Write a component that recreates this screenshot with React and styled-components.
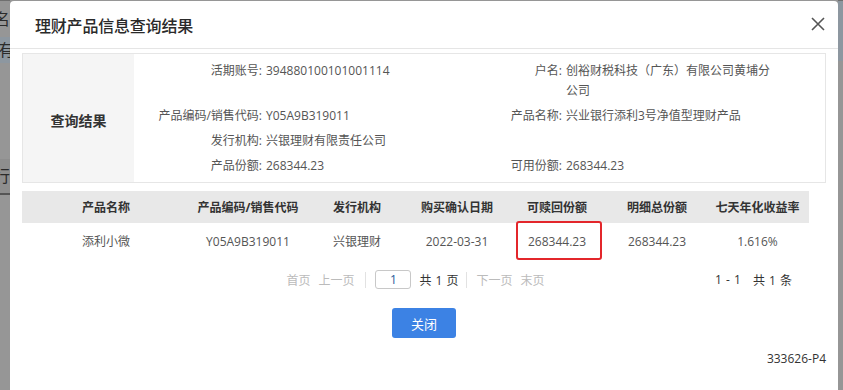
import styled, { createGlobalStyle } from "styled-components";

const GlobalStyle = createGlobalStyle`
  html, body {
    margin: 0;
    padding: 0;
    height: 100%;
    overflow: hidden;
  }
  body {
    font-family: "Open Sans", "Noto Sans CJK SC", sans-serif;
    color: #333;
  }
`;

const cols = "168px 116px 102px 98px 102px 98px 103px";

const Page = styled.div`
  display: flex;
  height: 390px;
  background: #969696;
  overflow: hidden;
`;

const SideStrip = styled.div`
  width: ${(p) => p.w}px;
  flex: none;
  display: flex;
  flex-direction: column;
  border-top: 1px solid #6f6f6f;
  overflow: hidden;
`;

const StripBand = styled.div`
  height: ${(p) => p.h}px;
  background: ${(p) => p.bg || "transparent"};
  font-size: 16px;
  line-height: ${(p) => p.h}px;
  color: #2b2b2b;
  white-space: nowrap;
  text-indent: ${(p) => p.indent || 0}px;
`;

const Modal = styled.div`
  width: 828px;
  flex: none;
  margin-top: 1px;
  background: #fff;
  border-radius: 4px 4px 0 0;
  display: flex;
  flex-direction: column;
`;

const Header = styled.div`
  height: 47px;
  border-bottom: 1px solid #e5e5e5;
  display: flex;
  align-items: center;
  justify-content: space-between;
  padding: 0 13px 0 25px;
`;

const Title = styled.div`
  font-size: 16px;
  font-weight: 500;
  color: #2a2a2a;
  letter-spacing: -0.2px;
`;

const CloseIcon = styled.svg`
  width: 14px;
  height: 14px;
  margin-top: -2px;
`;

const Body = styled.div`
  padding: 4px 12px 0;
  display: flex;
  flex-direction: column;
`;

const InfoBox = styled.div`
  height: 130px;
  border: 1px solid #e6e6e6;
  box-sizing: border-box;
  display: flex;
`;

const InfoLabel = styled.div`
  width: 111px;
  background: #f5f5f5;
  display: flex;
  align-items: center;
  justify-content: center;
  font-size: 14px;
  font-weight: 700;
  color: #333;
  padding-top: 4px;
`;

const InfoGrid = styled.div`
  display: grid;
  grid-template-columns: 128px 164px 128px 206px;
  column-gap: 4px;
  align-content: start;
  padding-top: 4px;
  font-size: 12px;
  line-height: 20px;
`;

const FieldName = styled.div`
  text-align: right;
  color: #555;
  padding: 2.5px 0;
  white-space: nowrap;
`;

const FieldValue = styled.div`
  color: #555;
  padding: 2.5px 0;
  word-break: break-all;
`;

const Table = styled.div`
  margin-top: 8px;
  width: 787px;
  font-size: 12px;
`;

const Row = styled.div`
  display: grid;
  grid-template-columns: ${cols};
  height: ${(p) => (p.head ? 32 : 36)}px;
  align-items: center;
  background: ${(p) => (p.head ? "#e8e8e8" : "#fff")};
  font-weight: ${(p) => (p.head ? 700 : 400)};
  color: ${(p) => (p.head ? "#333" : "#555")};
`;

const Cell = styled.div`
  position: relative;
  text-align: center;
  height: 100%;
  display: flex;
  align-items: center;
  justify-content: center;
`;

const Mark = styled.span`
  position: absolute;
  left: 10px;
  top: -2px;
  width: 86px;
  height: 39px;
  box-sizing: border-box;
  border: 2px solid #e3262b;
  border-radius: 3px;
`;

const Pager = styled.div`
  width: 787px;
  margin-top: 11px;
  display: grid;
  grid-template-columns: 1fr auto 1fr;
  align-items: center;
  font-size: 12px;
  height: 19px;
`;

const PagerGroup = styled.div`
  grid-column: 2;
  display: flex;
  align-items: center;
`;

const PageLink = styled.span`
  color: #bbb;
  margin-right: ${(p) => p.mr || 0}px;
`;

const Sep = styled.span`
  width: 1px;
  height: 16px;
  background: #e2e2e2;
  margin: 0 ${(p) => p.mr}px 0 ${(p) => p.ml}px;
`;

const PageInput = styled.div`
  width: 36px;
  height: 19px;
  box-sizing: border-box;
  border: 1px solid #c8c8c8;
  border-radius: 3px;
  display: flex;
  align-items: center;
  justify-content: center;
  color: #2a5b9a;
  margin-right: 8px;
`;

const PageTotal = styled.span`
  color: #333;
  word-spacing: 1px;
`;

const Count = styled.div`
  justify-self: end;
  padding-right: 17px;
  color: #333;
  display: flex;
  gap: 12px;
  word-spacing: 1px;
`;

const Actions = styled.div`
  display: flex;
  justify-content: center;
  margin-top: 19px;
`;

const CloseButton = styled.button`
  width: 64px;
  height: 30px;
  border: none;
  border-radius: 3px;
  background: #3c82e4;
  color: #fff;
  font-family: inherit;
  font-size: 13px;
  padding: 0;
`;

const Footnote = styled.div`
  align-self: flex-end;
  margin-top: 12px;
  font-size: 12px;
  color: #333;
`;

const fields = [
  ["活期账号:", "394880100101001114", "户名:", "创裕财税科技（广东）有限公司黄埔分公司"],
  ["产品编码/销售代码:", "Y05A9B319011", "产品名称:", "兴业银行添利3号净值型理财产品"],
  ["发行机构:", "兴银理财有限责任公司", "", ""],
  ["产品份额:", "268344.23", "可用份额:", "268344.23"],
];

const heads = ["产品名称", "产品编码/销售代码", "发行机构", "购买确认日期", "可赎回份额", "明细总份额", "七天年化收益率"];
const rows = [["添利小微", "Y05A9B319011", "兴银理财", "2022-03-31", "268344.23", "268344.23", "1.616%"]];

export default function App() {
  return (
    <>
      <GlobalStyle />
      <Page>
        <SideStrip w={10}>
          <StripBand h={36} indent={-6}>名</StripBand>
          <StripBand h={26} bg="#8d97a0" indent={-2}>有</StripBand>
          <StripBand h={96} />
          <StripBand h={34} bg="#8e8e8e" indent={-6}>行</StripBand>
          <StripBand h={2} bg="#555" />
        </SideStrip>
        <Modal>
          <Header>
            <Title>理财产品信息查询结果</Title>
            <CloseIcon viewBox="0 0 14 14">
              <path d="M1 1L13 13M13 1L1 13" stroke="#555" strokeWidth="1.6" fill="none" />
            </CloseIcon>
          </Header>
          <Body>
            <InfoBox>
              <InfoLabel>查询结果</InfoLabel>
              <InfoGrid>
                {fields.map((f, i) => [
                  <FieldName key={`a${i}`}>{f[0]}</FieldName>,
                  <FieldValue key={`b${i}`}>{f[1]}</FieldValue>,
                  <FieldName key={`c${i}`}>{f[2]}</FieldName>,
                  <FieldValue key={`d${i}`}>{f[3]}</FieldValue>,
                ])}
              </InfoGrid>
            </InfoBox>
            <Table>
              <Row head>
                {heads.map((h) => (
                  <Cell key={h}>{h}</Cell>
                ))}
              </Row>
              {rows.map((r, i) => (
                <Row key={i}>
                  {r.map((v, j) => (
                    <Cell key={j}>
                      {v}
                      {j === 4 && <Mark />}
                    </Cell>
                  ))}
                </Row>
              ))}
            </Table>
            <Pager>
              <PagerGroup>
                <PageLink mr={8}>首页</PageLink>
                <PageLink>上一页</PageLink>
                <Sep ml={11} mr={9} />
                <PageInput>1</PageInput>
                <PageTotal>共 1 页</PageTotal>
                <Sep ml={7} mr={10} />
                <PageLink mr={8}>下一页</PageLink>
                <PageLink>末页</PageLink>
              </PagerGroup>
              <Count>
                <span>1 - 1</span>
                <span>共 1 条</span>
              </Count>
            </Pager>
            <Actions>
              <CloseButton>关闭</CloseButton>
            </Actions>
            <Footnote>333626-P4</Footnote>
          </Body>
        </Modal>
        <SideStrip w={5}>
          <StripBand h={60} bg="#8d97a0" />
        </SideStrip>
      </Page>
    </>
  );
}
